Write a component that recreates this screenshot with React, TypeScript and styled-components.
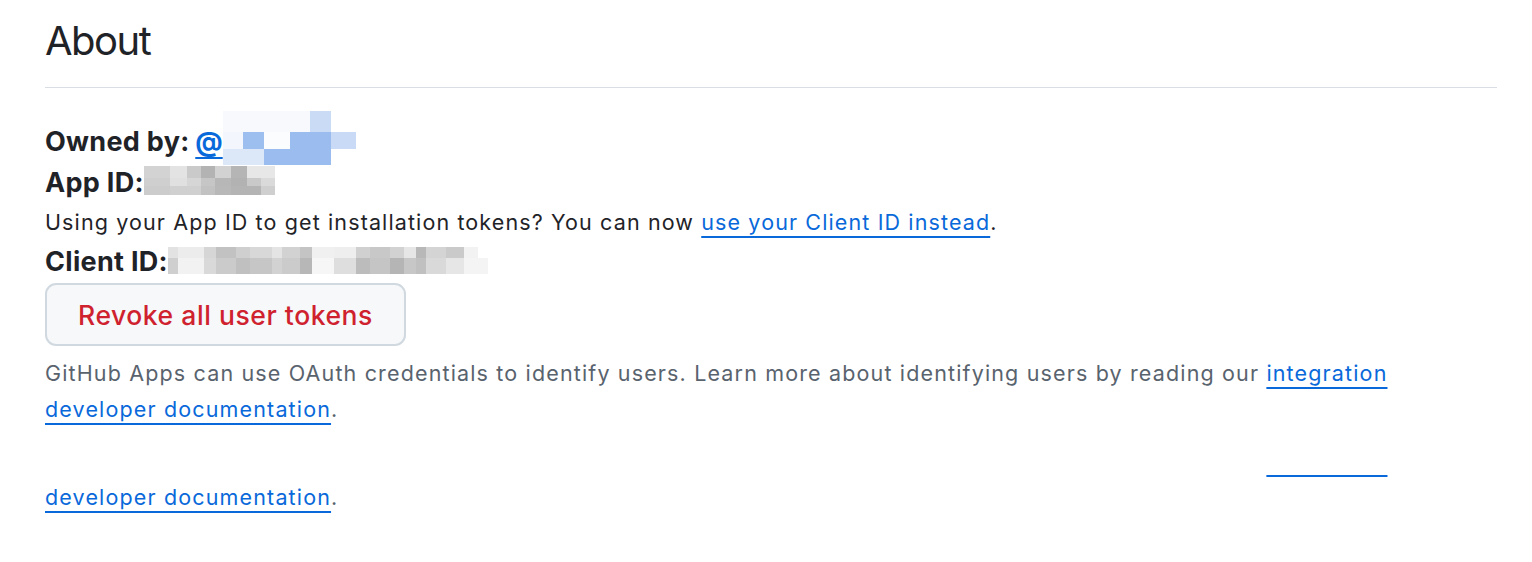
import React from "react";
import styled, { createGlobalStyle } from "styled-components";

const Global = createGlobalStyle`
  html, body { margin: 0; padding: 0; background: #ffffff; }
  body { font-family: Inter, "Noto Sans", "Liberation Sans", sans-serif; color: #1f2328; }
`;

const Page = styled.div`
  padding: 0 35px 0 45px;
`;

const Header = styled.div`
  height: 87px;
  border-bottom: 1px solid #d8dee4;
  display: flex;
  align-items: flex-start;
`;

const Title = styled.h2`
  margin: 16px 0 0;
  font-size: 40px;
  font-weight: 400;
  line-height: 50px;
  letter-spacing: -1.5px;
`;

const Body = styled.div`
  padding-top: 32px;
`;

const Row = styled.div<{ $h: number }>`
  display: flex;
  align-items: center;
  height: ${(p) => p.$h}px;
  white-space: nowrap;
`;

const Strong = styled.span`
  font-size: 27px;
  font-weight: 700;
  letter-spacing: 0.3px;
`;

const OwnerLink = styled.a`
  color: #0969da;
  margin-left: -1px;
  letter-spacing: 0;
  text-decoration: underline;
  text-underline-offset: 6px;
  text-decoration-thickness: 2px;
`;

const Text = styled.span`
  font-size: 21.5px;
  letter-spacing: 1.12px;
  color: #1f2328;
`;

const Link = styled.a`
  color: #0969da;
  text-decoration: underline;
  text-underline-offset: 6px;
  text-decoration-thickness: 2px;
`;

const Button = styled.button`
  margin-top: 2px;
  width: 361px;
  height: 63px;
  border: 2px solid #d1d9e0;
  border-radius: 11px;
  background: #f6f8fa;
  color: #cf222e;
  font-family: inherit;
  font-size: 26.5px;
  font-weight: 500;
  letter-spacing: 0.55px;
  padding: 0;
`;

const Note = styled.p<{ $ghost?: boolean }>`
  margin: ${(p) => (p.$ghost ? "16px" : "9px")} 0 0;
  font-size: 21.5px;
  letter-spacing: 1.15px;
  line-height: 36px;
  white-space: nowrap;
  color: ${(p) => (p.$ghost ? "transparent" : "#59636e")};
`;

const NoteLink = styled.a<{ $hide?: boolean }>`
  color: ${(p) => (p.$hide ? "transparent" : "#0969da")};
  text-decoration: underline;
  text-decoration-color: #0969da;
  text-underline-offset: 6px;
  text-decoration-thickness: 2px;
`;

const Dot = styled.span`
  color: #59636e;
`;

const MosaicSvg = styled.svg<{ $dy: number }>`
  display: block;
  flex: none;
  margin-top: ${(p) => p.$dy}px;
`;

type Cell = [number, string];
type MRow = { h: number; cells: Cell[] };

function Mosaic({ rows, dy }: { rows: MRow[]; dy: number }) {
  const width = Math.max(...rows.map((r) => r.cells.reduce((a, c) => a + c[0], 0)));
  const height = rows.reduce((a, r) => a + r.h, 0);
  let y = 0;
  const rects: React.ReactNode[] = [];
  rows.forEach((r, ri) => {
    let x = 0;
    r.cells.forEach((c, ci) => {
      rects.push(<rect key={ri + "-" + ci} x={x} y={y} width={c[0]} height={r.h} fill={c[1]} />);
      x += c[0];
    });
    y += r.h;
  });
  return (
    <MosaicSvg $dy={dy} width={width} height={height} viewBox={`0 0 ${width} ${height}`}>
      {rects}
    </MosaicSvg>
  );
}

const ownerRows: MRow[] = [
  { h: 21, cells: [[87, "#f7f9fd"], [21, "#c9dbf5"], [25, "#ffffff"]] },
  { h: 17, cells: [[20, "#f3f6fc"], [21, "#9dbff0"], [26, "#fbfcfe"], [41, "#9abcef"], [25, "#c8daf5"]] },
  { h: 16, cells: [[41, "#dce7f8"], [67, "#9abcef"], [25, "#ffffff"]] },
];

const appRows: MRow[] = [
  { h: 12, cells: [[26, "#d3d3d3"], [17, "#e3e3e3"], [14, "#cacaca"], [14, "#b3b3b3"], [16, "#d2d2d2"], [16, "#b5b5b5"], [28, "#e7e7e7"]] },
  { h: 8, cells: [[26, "#cfcfcf"], [17, "#e0e0e0"], [14, "#d6d6d6"], [14, "#c6c6c6"], [16, "#b7b7b7"], [16, "#b2b2b2"], [14, "#c9c9c9"], [14, "#dadada"]] },
  { h: 9, cells: [[26, "#cccccc"], [31, "#d0d0d0"], [14, "#c2c2c2"], [16, "#b8b8b8"], [30, "#b4b4b4"], [14, "#cfcfcf"]] },
];

const clientRows: MRow[] = [
  { h: 11, cells: [[10, "#e2e2e2"], [26, "#ececec"], [12, "#d6d6d6"], [20, "#c2c2c2"], [14, "#cfcfcf"], [22, "#d8d8d8"], [10, "#e4e4e4"], [18, "#d2d2d2"], [12, "#c4c4c4"], [22, "#f0f0f0"], [22, "#eeeeee"], [14, "#d0d0d0"], [20, "#c8c8c8"], [14, "#d2d2d2"], [12, "#e6e6e6"], [10, "#b8b8b8"], [20, "#d4d4d4"], [18, "#cacaca"], [14, "#f2f2f2"]] },
  { h: 16, cells: [[10, "#cfcfcf"], [26, "#f2f2f2"], [12, "#d9d9d9"], [20, "#cbcbcb"], [14, "#c0c0c0"], [22, "#c6c6c6"], [10, "#d2d2d2"], [18, "#cbcbcb"], [12, "#b7b7b7"], [22, "#f6f6f6"], [22, "#dedede"], [14, "#bcbcbc"], [20, "#c5c5c5"], [14, "#b5b5b5"], [12, "#c7c7c7"], [10, "#c0c0c0"], [20, "#d9d9d9"], [18, "#e6e6e6"], [24, "#f4f4f4"]] },
];

function NoteParagraph({ ghost }: { ghost?: boolean }) {
  return (
    <Note $ghost={ghost}>
      GitHub Apps can use OAuth credentials to identify users. Learn more about identifying users by reading our{" "}
      <NoteLink href="#" $hide={ghost}>
        integration
      </NoteLink>
      <br />
      <NoteLink href="#">developer documentation</NoteLink>
      <Dot>.</Dot>
    </Note>
  );
}

export default function App() {
  return (
    <>
      <Global />
      <Page>
        <Header>
          <Title>About</Title>
        </Header>
        <Body>
          <Row $h={42}>
            <Strong>
              Owned by: <OwnerLink href="#">@</OwnerLink>
            </Strong>
            <Mosaic rows={ownerRows} dy={-6} />
          </Row>
          <Row $h={40}>
            <Strong>App ID:</Strong>
            <Mosaic rows={appRows} dy={-4} />
          </Row>
          <Row $h={40}>
            <Text>
              Using your App ID to get installation tokens? You can now{" "}
              <Link href="#">use your Client ID instead</Link>.
            </Text>
          </Row>
          <Row $h={39}>
            <Strong>Client ID:</Strong>
            <Mosaic rows={clientRows} dy={-2} />
          </Row>
          <Button type="button">Revoke all user tokens</Button>
          <NoteParagraph />
          <NoteParagraph ghost />
        </Body>
      </Page>
    </>
  );
}
